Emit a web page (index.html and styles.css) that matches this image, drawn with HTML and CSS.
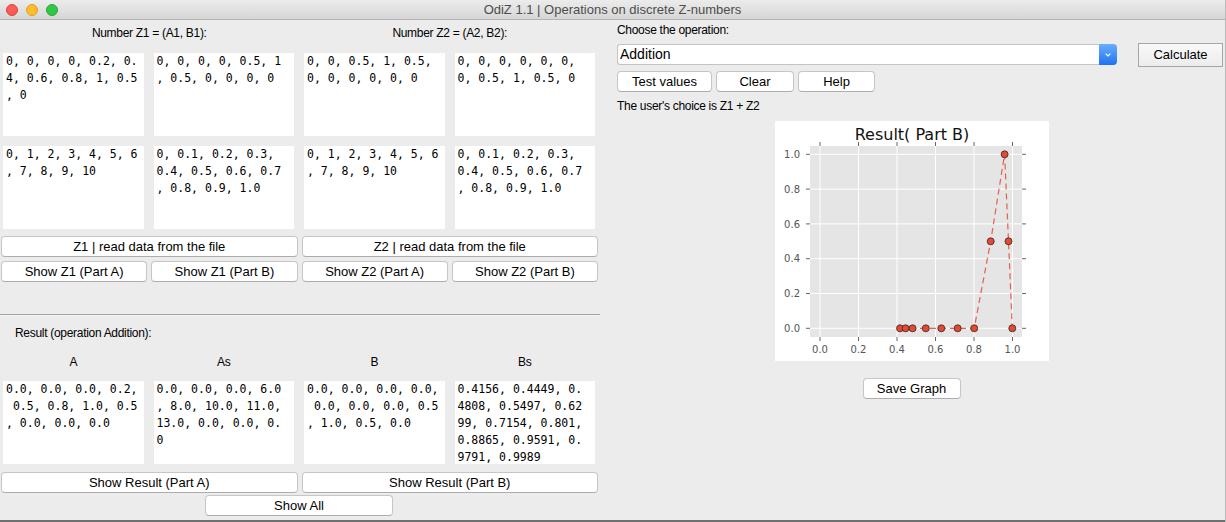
FILE: index.html
```html
<!DOCTYPE html>
<html>
<head>
<meta charset="utf-8">
<title>OdiZ 1.1</title>
<link rel="stylesheet" href="styles.css">
</head>
<body>
<div class="window">
  <div class="titlebar">
    <div class="lights">
      <span class="light red"></span>
      <span class="light yellow"></span>
      <span class="light green"></span>
    </div>
    <div class="title">OdiZ 1.1 | Operations on discrete Z-numbers</div>
    <div></div>
  </div>
  <div class="main">
    <div class="left">
      <div class="heads">
        <div class="lbl">Number Z1 = (A1, B1):</div>
        <div class="lbl">Number Z2 = (A2, B2):</div>
      </div>
      <div class="boxes">
        <div class="box">0, 0, 0, 0, 0.2, 0.
4, 0.6, 0.8, 1, 0.5
, 0</div>
        <div class="box">0, 0, 0, 0, 0.5, 1
, 0.5, 0, 0, 0, 0</div>
        <div class="box">0, 0, 0.5, 1, 0.5,
0, 0, 0, 0, 0, 0</div>
        <div class="box">0, 0, 0, 0, 0, 0,
0, 0.5, 1, 0.5, 0</div>
        <div class="box">0, 1, 2, 3, 4, 5, 6
, 7, 8, 9, 10</div>
        <div class="box">0, 0.1, 0.2, 0.3,
0.4, 0.5, 0.6, 0.7
, 0.8, 0.9, 1.0</div>
        <div class="box">0, 1, 2, 3, 4, 5, 6
, 7, 8, 9, 10</div>
        <div class="box">0, 0.1, 0.2, 0.3,
0.4, 0.5, 0.6, 0.7
, 0.8, 0.9, 1.0</div>
      </div>
      <div class="row2 first">
        <button class="btn">Z1 | read data from the file</button>
        <button class="btn">Z2 | read data from the file</button>
      </div>
      <div class="row4">
        <button class="btn">Show Z1 (Part A)</button>
        <button class="btn">Show Z1 (Part B)</button>
        <button class="btn">Show Z2 (Part A)</button>
        <button class="btn">Show Z2 (Part B)</button>
      </div>
      <div class="sep"></div>
      <div class="lbl result-lbl">Result (operation Addition):</div>
      <div class="colheads">
        <div class="lbl">A</div>
        <div class="lbl">As</div>
        <div class="lbl">B</div>
        <div class="lbl">Bs</div>
      </div>
      <div class="boxes results">
        <div class="box">0.0, 0.0, 0.0, 0.2,
 0.5, 0.8, 1.0, 0.5
, 0.0, 0.0, 0.0</div>
        <div class="box">0.0, 0.0, 0.0, 6.0
, 8.0, 10.0, 11.0,
13.0, 0.0, 0.0, 0.
0</div>
        <div class="box">0.0, 0.0, 0.0, 0.0,
 0.0, 0.0, 0.0, 0.5
, 1.0, 0.5, 0.0</div>
        <div class="box">0.4156, 0.4449, 0.
4808, 0.5497, 0.62
99, 0.7154, 0.801,
0.8865, 0.9591, 0.
9791, 0.9989</div>
      </div>
      <div class="row2 res">
        <button class="btn">Show Result (Part A)</button>
        <button class="btn">Show Result (Part B)</button>
      </div>
      <button class="btn showall">Show All</button>
    </div>
    <div class="right">
      <div class="lbl choose">Choose the operation:</div>
      <div class="oprow">
        <div class="select">
          <span class="sel-text">Addition</span>
          <span class="sel-arrow"><svg width="18" height="21" viewBox="0 0 18 21"><polyline points="6.6,9.6 9,12 11.4,9.6" fill="none" stroke="#fff" stroke-width="1.2"/></svg></span>
        </div>
        <button class="calc">Calculate</button>
      </div>
      <div class="tools">
        <button class="btn tv">Test values</button>
        <button class="btn cl">Clear</button>
        <button class="btn hp">Help</button>
      </div>
      <div class="lbl choice">The user's choice is Z1 + Z2</div>
      <div class="chart">
        <svg width="274" height="240" viewBox="0 0 274 240" class="plot">
          <text x="137" y="19" text-anchor="middle" class="ptitle">Result( Part B)</text>
          <rect x="35" y="25" width="212" height="191" fill="#e5e5e5"/>
          <g stroke="#fff" stroke-width="1">
            <line x1="45" y1="25" x2="45" y2="216"/>
            <line x1="83.5" y1="25" x2="83.5" y2="216"/>
            <line x1="122" y1="25" x2="122" y2="216"/>
            <line x1="160.5" y1="25" x2="160.5" y2="216"/>
            <line x1="199" y1="25" x2="199" y2="216"/>
            <line x1="237.5" y1="25" x2="237.5" y2="216"/>
            <line x1="35" y1="207.3" x2="247" y2="207.3"/>
            <line x1="35" y1="172.5" x2="247" y2="172.5"/>
            <line x1="35" y1="137.7" x2="247" y2="137.7"/>
            <line x1="35" y1="102.9" x2="247" y2="102.9"/>
            <line x1="35" y1="68.1" x2="247" y2="68.1"/>
            <line x1="35" y1="33.3" x2="247" y2="33.3"/>
          </g>
          <g stroke="#666" stroke-width="1">
            <line x1="45" y1="21" x2="45" y2="25"/>
            <line x1="83.5" y1="21" x2="83.5" y2="25"/>
            <line x1="122" y1="21" x2="122" y2="25"/>
            <line x1="160.5" y1="21" x2="160.5" y2="25"/>
            <line x1="199" y1="21" x2="199" y2="25"/>
            <line x1="237.5" y1="21" x2="237.5" y2="25"/>
            <line x1="45" y1="216" x2="45" y2="220"/>
            <line x1="83.5" y1="216" x2="83.5" y2="220"/>
            <line x1="122" y1="216" x2="122" y2="220"/>
            <line x1="160.5" y1="216" x2="160.5" y2="220"/>
            <line x1="199" y1="216" x2="199" y2="220"/>
            <line x1="237.5" y1="216" x2="237.5" y2="220"/>
            <line x1="31" y1="207.3" x2="35" y2="207.3"/>
            <line x1="31" y1="172.5" x2="35" y2="172.5"/>
            <line x1="31" y1="137.7" x2="35" y2="137.7"/>
            <line x1="31" y1="102.9" x2="35" y2="102.9"/>
            <line x1="31" y1="68.1" x2="35" y2="68.1"/>
            <line x1="31" y1="33.3" x2="35" y2="33.3"/>
            <line x1="247" y1="207.3" x2="251" y2="207.3"/>
            <line x1="247" y1="172.5" x2="251" y2="172.5"/>
            <line x1="247" y1="137.7" x2="251" y2="137.7"/>
            <line x1="247" y1="102.9" x2="251" y2="102.9"/>
            <line x1="247" y1="68.1" x2="251" y2="68.1"/>
            <line x1="247" y1="33.3" x2="251" y2="33.3"/>
          </g>
          <g class="tick" text-anchor="end">
            <text x="25" y="210.9">0.0</text>
            <text x="25" y="176.1">0.2</text>
            <text x="25" y="141.3">0.4</text>
            <text x="25" y="106.5">0.6</text>
            <text x="25" y="71.7">0.8</text>
            <text x="25" y="36.9">1.0</text>
          </g>
          <g class="tick" text-anchor="middle">
            <text x="45" y="232">0.0</text>
            <text x="83.5" y="232">0.2</text>
            <text x="122" y="232">0.4</text>
            <text x="160.5" y="232">0.6</text>
            <text x="199" y="232">0.8</text>
            <text x="237.5" y="232">1.0</text>
          </g>
          <polyline fill="none" stroke="#e24a33" stroke-opacity="0.85" stroke-width="1.2" stroke-dasharray="6 4"
            points="125,207.3 130.6,207.3 137.6,207.3 150.8,207.3 166.3,207.3 182.7,207.3 199.2,207.3 215.7,120.3 229.6,33.3 233.5,120.3 237.3,207.3"/>
          <g fill="#e24a33" stroke="#3b2523" stroke-width="0.8">
            <circle cx="125" cy="207.3" r="3.5"/>
            <circle cx="130.6" cy="207.3" r="3.5"/>
            <circle cx="137.6" cy="207.3" r="3.5"/>
            <circle cx="150.8" cy="207.3" r="3.5"/>
            <circle cx="166.3" cy="207.3" r="3.5"/>
            <circle cx="182.7" cy="207.3" r="3.5"/>
            <circle cx="199.2" cy="207.3" r="3.5"/>
            <circle cx="215.7" cy="120.3" r="3.5"/>
            <circle cx="229.6" cy="33.3" r="3.5"/>
            <circle cx="233.5" cy="120.3" r="3.5"/>
            <circle cx="237.3" cy="207.3" r="3.5"/>
          </g>
        </svg>
      </div>
      <button class="btn save">Save Graph</button>
    </div>
  </div>
  <div class="bottom-edge"></div>
</div>
</body>
</html>
```

FILE: styles.css
```css
* {
  box-sizing: border-box;
  margin: 0;
  padding: 0;
}

html,
body {
  width: 1226px;
  height: 522px;
  overflow: hidden;
  background: #ececec;
}

body {
  font-family: "Liberation Sans", Arial, sans-serif;
  color: #000;
}

.window {
  width: 1226px;
  height: 522px;
  display: flex;
  flex-direction: column;
  background: #ececec;
  border-right: 1px solid #b9b9b9;
}

.titlebar {
  flex: none;
  height: 20px;
  display: grid;
  grid-template-columns: 1fr auto 1fr;
  align-items: center;
  background: linear-gradient(#ececec, #d6d6d6);
  border-bottom: 1px solid #b3b3b3;
}

.lights {
  display: flex;
  gap: 8px;
  padding-left: 6px;
}

.light {
  width: 12px;
  height: 12px;
  border-radius: 50%;
}

.red {
  background: #fc5b57;
  border: 1px solid #e0443e;
}

.yellow {
  background: #fdbc2e;
  border: 1px solid #dea123;
}

.green {
  background: #33c748;
  border: 1px solid #27aa35;
}

.title {
  font-size: 13px;
  color: #4d4d4d;
  line-height: 19px;
}

.main {
  flex: 1;
  display: flex;
  overflow: hidden;
}

.left {
  width: 600px;
  flex: none;
  display: flex;
  flex-direction: column;
}

.lbl {
  font-size: 12px;
  line-height: 14px;
  letter-spacing: -0.3px;
  white-space: nowrap;
}

.heads {
  display: grid;
  grid-template-columns: 1fr 1fr;
  gap: 4px;
  padding: 6px 2px 0 1px;
  text-align: center;
}

.boxes {
  display: grid;
  grid-template-columns: repeat(4, 1fr);
  column-gap: 10px;
  row-gap: 10px;
  padding: 0 5px 0 3px;
  margin-top: 13px;
}

.box {
  height: 83px;
  background: #fff;
  font-family: "DejaVu Sans Mono", monospace;
  font-size: 11.5px;
  line-height: 17px;
  padding: 0 3px;
  white-space: pre;
  overflow: hidden;
  color: #000;
}

.btn {
  height: 21px;
  background: #fff;
  border: 1px solid #c6c6c6;
  border-bottom-color: #adadad;
  border-radius: 4px;
  font-family: "Liberation Sans", Arial, sans-serif;
  font-size: 13px;
  color: #000;
  display: flex;
  align-items: center;
  justify-content: center;
  white-space: nowrap;
}

.row2 {
  display: grid;
  grid-template-columns: 1fr 1fr;
  gap: 4px;
  padding: 0 2px 0 1px;
}

.row2.first {
  margin-top: 7px;
}

.row4 {
  display: grid;
  grid-template-columns: repeat(4, 1fr);
  gap: 4px;
  padding: 0 2px 0 1px;
  margin-top: 4px;
}

.sep {
  height: 2px;
  margin-top: 32px;
  border-top: 1px solid #a2a2a2;
  border-bottom: 1px solid #f6f6f6;
}

.result-lbl {
  margin-top: 10px;
  padding-left: 15px;
}

.colheads {
  display: grid;
  grid-template-columns: repeat(4, 1fr);
  column-gap: 10px;
  padding: 0 5px 0 3px;
  margin-top: 15px;
  text-align: center;
}

.boxes.results {
  margin-top: 12px;
}

.row2.res {
  margin-top: 8px;
}

.showall {
  width: 188px;
  margin-top: 2px;
  margin-left: 205px;
}

.right {
  flex: 1;
  display: flex;
  flex-direction: column;
  padding-right: 2px;
}

.choose {
  margin-top: 3px;
  padding-left: 17px;
}

.oprow {
  display: flex;
  align-items: center;
  height: 25px;
  margin-top: 5px;
  padding-left: 17px;
}

.select {
  width: 500px;
  height: 21px;
  display: flex;
  background: #fff;
  border: 1px solid #c4c4c4;
  border-right: none;
  border-radius: 3px 4px 4px 3px;
}

.sel-text {
  flex: 1;
  font-size: 14px;
  line-height: 19px;
  padding-left: 2px;
}

.sel-arrow {
  width: 18px;
  height: 21px;
  margin-top: -1px;
  border-radius: 0 4px 4px 0;
  background: linear-gradient(#69aefb, #1f72f0);
  display: flex;
}

.calc {
  width: 85px;
  height: 24px;
  margin-left: 21px;
  background: linear-gradient(#f9f9f9, #ececec);
  border: 1px solid #a6a6a6;
  font-family: "Liberation Sans", Arial, sans-serif;
  font-size: 13px;
  color: #000;
}

.tools {
  display: flex;
  gap: 4px;
  margin-top: 4px;
  padding-left: 17px;
}

.tv {
  width: 95px;
}

.cl {
  width: 78px;
}

.hp {
  width: 77px;
}

.choice {
  margin-top: 7px;
  padding-left: 17px;
}

.chart {
  align-self: center;
  width: 274px;
  height: 240px;
  margin-top: 8px;
  background: #fff;
}

.plot {
  display: block;
  font-family: "DejaVu Sans", sans-serif;
}

.ptitle {
  font-size: 16px;
  fill: #111;
}

.tick {
  font-size: 10px;
  fill: #555;
}

.save {
  align-self: center;
  width: 98px;
  margin-top: 17px;
}

.bottom-edge {
  flex: none;
  height: 2px;
  background: #707070;
}
```
